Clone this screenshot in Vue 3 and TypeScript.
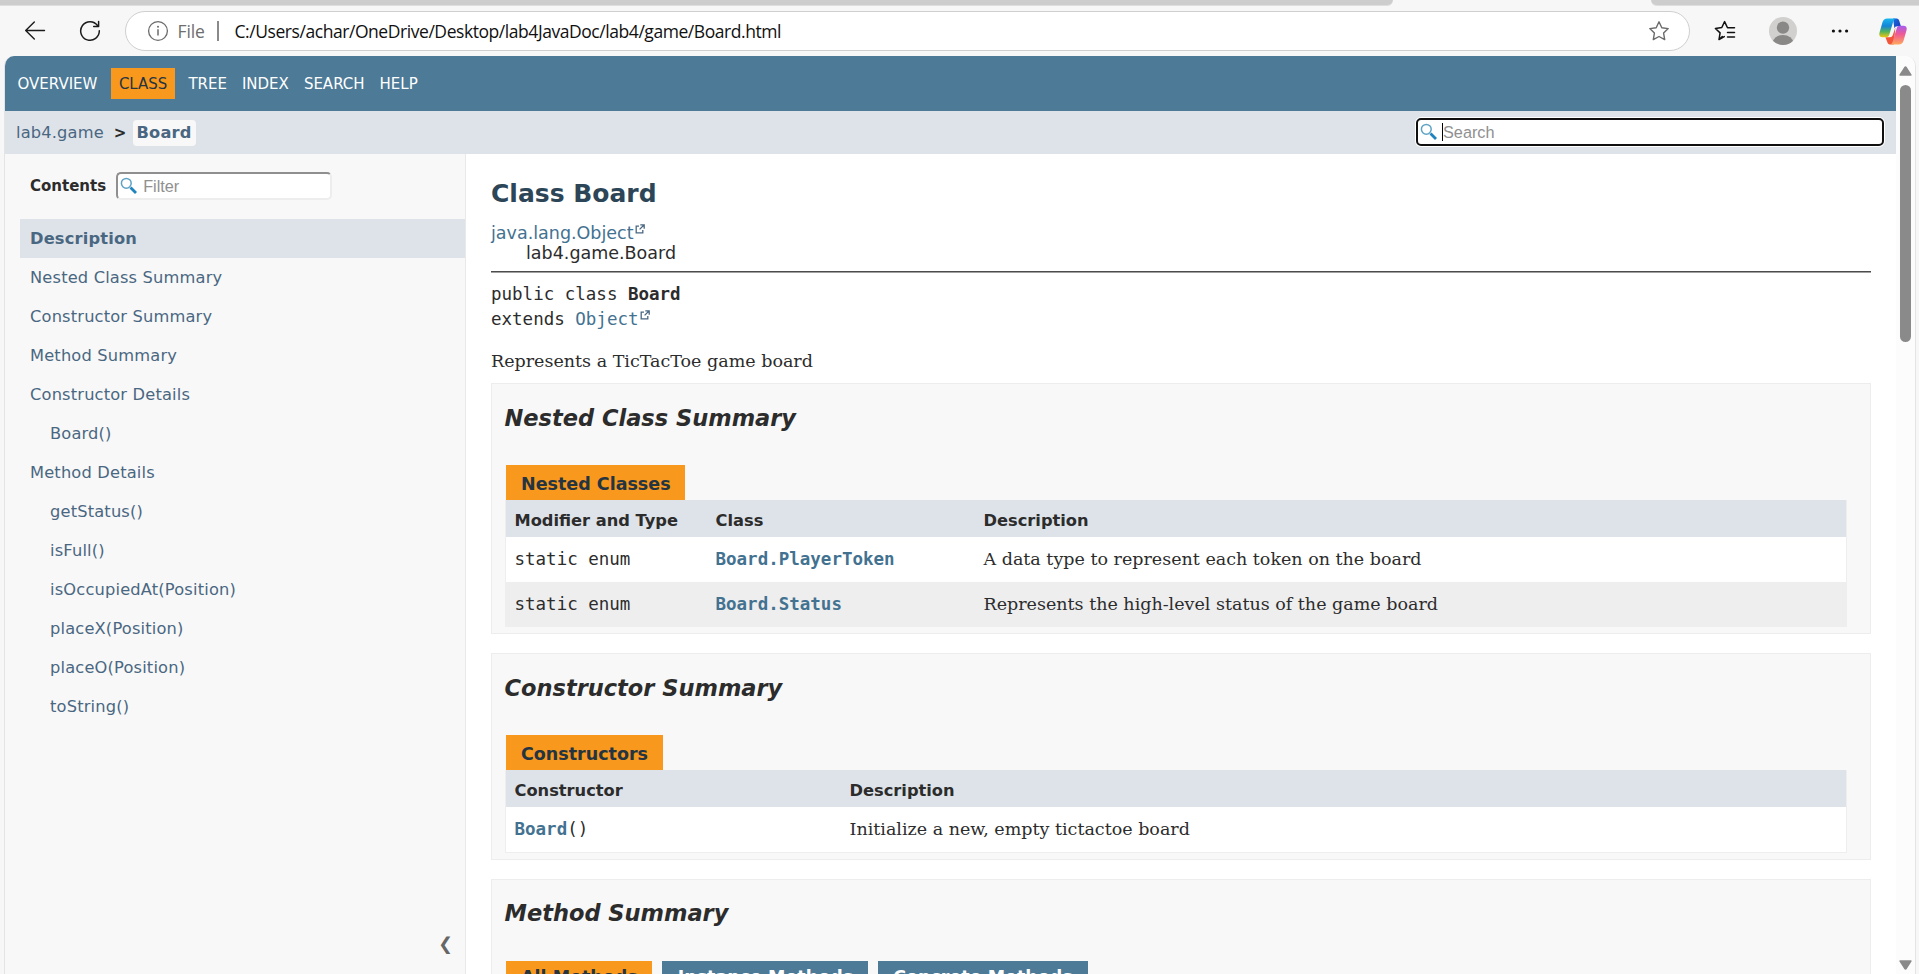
<script setup lang="ts">
import { ref } from 'vue'

interface TocItem {
  label: string
  nested?: boolean
}

interface SummaryRow {
  modifier?: string
  name: string
  suffix?: string
  description: string
}

interface Summary {
  title: string
  caption: string
  kind: string
  columns: string[]
  rows: SummaryRow[]
}

const url = 'C:/Users/achar/OneDrive/Desktop/lab4JavaDoc/lab4/game/Board.html'
const navItems = ['OVERVIEW', 'CLASS', 'TREE', 'INDEX', 'SEARCH', 'HELP']
const activeNav = ref('CLASS')
const activeToc = ref('Description')

const toc: TocItem[] = [
  { label: 'Description' },
  { label: 'Nested Class Summary' },
  { label: 'Constructor Summary' },
  { label: 'Method Summary' },
  { label: 'Constructor Details' },
  { label: 'Board()', nested: true },
  { label: 'Method Details' },
  { label: 'getStatus()', nested: true },
  { label: 'isFull()', nested: true },
  { label: 'isOccupiedAt(Position)', nested: true },
  { label: 'placeX(Position)', nested: true },
  { label: 'placeO(Position)', nested: true },
  { label: 'toString()', nested: true },
]

const summaries: Summary[] = [
  {
    title: 'Nested Class Summary',
    caption: 'Nested Classes',
    kind: 'three',
    columns: ['Modifier and Type', 'Class', 'Description'],
    rows: [
      { modifier: 'static enum', name: 'Board.PlayerToken', description: 'A data type to represent each token on the board' },
      { modifier: 'static enum', name: 'Board.Status', description: 'Represents the high-level status of the game board' },
    ],
  },
  {
    title: 'Constructor Summary',
    caption: 'Constructors',
    kind: 'two',
    columns: ['Constructor', 'Description'],
    rows: [{ name: 'Board', suffix: '()', description: 'Initialize a new, empty tictactoe board' }],
  },
]

const methodTabs = ['All Methods', 'Instance Methods', 'Concrete Methods']
const activeTab = ref('All Methods')
</script>

<template>
  <div class="browser">
    <header class="toolbar">
      <div class="tabs"><i class="tab-left"></i><i class="tab-right"></i></div>
      <div class="controls">
        <svg class="back" width="22" height="20" viewBox="0 0 22 20" fill="none" stroke="#1b1b1b" stroke-width="1.4" stroke-linecap="round" stroke-linejoin="round">
          <path d="M10.3 .9 1.7 9.500l8.600 8.600M1.900 9.500h18.600" />
        </svg>
        <svg class="reload" width="22" height="22" viewBox="0 0 22 22" fill="none" stroke="#1b1b1b" stroke-width="1.5" stroke-linecap="round" stroke-linejoin="round">
          <path d="M20.3 10.7A9.3 9.3 0 1 1 18.6 5.6M19.6 1.6v4.9h-4.9" />
        </svg>
        <div class="address">
          <svg width="22" height="22" viewBox="0 0 22 22" fill="none" stroke="#6b6b6b" stroke-width="1.3">
            <circle cx="11" cy="11" r="9.4" />
            <path d="M11 9.3v6.3" stroke-width="1.5" />
            <circle cx="11" cy="6.7" r="1" fill="#6b6b6b" stroke="none" />
          </svg>
          <span class="scheme">File</span>
          <i class="divider"></i>
          <span class="url">{{ url }}</span>
          <svg class="star" width="22" height="22" viewBox="0 0 22 22" fill="none" stroke="#6b6b6b" stroke-width="1.4" stroke-linejoin="round">
            <path d="M11 1.8l2.8 5.9 6.4.9-4.6 4.5 1.1 6.5L11 16.5l-5.7 3.1 1.1-6.5L1.8 8.6l6.4-.9z" />
          </svg>
        </div>
        <svg class="favorites" width="22" height="22" viewBox="0 0 22 22" fill="none" stroke="#111" stroke-width="1.5" stroke-linejoin="round" stroke-linecap="round">
          <path d="M8.300 16.500 5 19.500l1.100-6.600-4.700-4.400 6.400-1 2.800-5.900 2.900 6.200h7M5 19.500l5.300-2.900M13.500 12.500h7M13.500 17.100h7" />
        </svg>
        <svg class="avatar" width="28" height="28" viewBox="0 0 28 28">
          <defs><clipPath id="face"><circle cx="14" cy="14" r="14" /></clipPath></defs>
          <g clip-path="url(#face)">
            <rect width="28" height="28" fill="#d2d0ce" />
            <circle cx="14" cy="10.6" r="6.2" fill="#8a8886" />
            <ellipse cx="14" cy="25.6" rx="10.2" ry="7.7" fill="#8a8886" />
          </g>
        </svg>
        <svg class="dots" width="18" height="6" viewBox="0 0 18 6" fill="#111">
          <circle cx="2.4" cy="3" r="1.6" /><circle cx="9" cy="3" r="1.6" /><circle cx="15.6" cy="3" r="1.6" />
        </svg>
        <svg class="copilot" width="28" height="27" viewBox="0 0 28 27">
          <defs>
            <linearGradient id="cpA" x1="0" y1="0" x2="0" y2="1">
              <stop offset="0" stop-color="#19b5ee" /><stop offset=".4" stop-color="#1485d8" />
              <stop offset=".7" stop-color="#55b35a" /><stop offset="1" stop-color="#f2c80f" />
            </linearGradient>
            <linearGradient id="cpB" x1="0" y1="0" x2="0" y2="1">
              <stop offset="0" stop-color="#a75bf0" /><stop offset=".45" stop-color="#ee5a95" />
              <stop offset="1" stop-color="#ffa85c" />
            </linearGradient>
            <linearGradient id="cpC" x1="0" y1="0" x2="1" y2="1">
              <stop offset="0" stop-color="#1b6fe0" /><stop offset="1" stop-color="#1a35b8" />
            </linearGradient>
          </defs>
          <path d="M14 .6h3.6c1.6 0 2.3 1 2.8 2.6l1.5 5h-3.4c-2 0-2.6.8-3.1 2.4z" fill="url(#cpC)" />
          <path d="M6.4 19.2h4.2c1.8 0 2.6-.7 3.2-2.2l2.6-7.5-1.6 16.9H11c-1.600 0-2.300-1-2.700-2.400z" fill="#f2553a" />
          <path d="M8.300.6h8.500c-1.500.4-2.100 1.600-2.600 3.200l-3.700 12.200c-.7 2.200-1.500 3.300-3.300 3.300H3.600C.8 19.300-.2 17.500.5 14.800L3.400 4.500C4.200 1.900 5.700.6 8.300.6z" fill="url(#cpA)" />
          <path d="M19.700 26.500h-8.500c1.500-.4 2.100-1.600 2.600-3.200l3.700-12.200c.7-2.200 1.500-3.300 3.300-3.300h3.600c2.800 0 3.800 1.800 3.100 4.500l-2.900 10.300c-.8 2.600-2.300 3.900-4.900 3.900z" fill="url(#cpB)" />
        </svg>
      </div>
    </header>

    <div class="window">
      <div class="page">
        <nav class="top-nav">
          <a v-for="item in navItems" :key="item" :class="{ active: item === activeNav }">{{ item }}</a>
        </nav>
        <div class="sub-nav">
          <a>lab4.game</a>
          <span class="sep">&gt;</span>
          <a class="current">Board</a>
          <label class="field search">
            <svg width="18" height="18" viewBox="0 0 18 18" fill="none">
              <circle cx="6.300" cy="6.300" r="4.900" stroke="#5fa3c4" stroke-width="1.500" />
              <path d="M10.500 10.500 16 16" stroke="#1f83be" stroke-width="2.800" />
            </svg>
            <i class="caret"></i>
            <input type="text" placeholder="Search" />
          </label>
        </div>

        <div class="columns">
          <aside class="sidebar">
            <div class="toc-header">
              <span>Contents</span>
              <label class="field filter">
                <svg width="18" height="18" viewBox="0 0 18 18" fill="none">
                  <circle cx="6.300" cy="6.300" r="4.900" stroke="#5fa3c4" stroke-width="1.500" />
                  <path d="M10.500 10.500 16 16" stroke="#1f83be" stroke-width="2.800" />
                </svg>
                <input type="text" placeholder="Filter" />
              </label>
            </div>
            <ol class="toc">
              <li v-for="item in toc" :key="item.label" :class="{ nested: item.nested, selected: item.label === activeToc }">
                {{ item.label }}
              </li>
            </ol>
            <span class="collapse">❮</span>
          </aside>

          <main>
            <h1>Class Board</h1>
            <div class="inheritance">
              <div><a>java.lang.Object</a><svg class="ext" width="10" height="10" viewBox="0 0 10 10" fill="none" stroke="#4a6782" stroke-width="1.300"><path d="M4 2.200H1.200v6.600h6.600V6M5.300.9h3.900v3.900M9 1 4.600 5.400" /></svg></div>
              <div class="child">lab4.game.Board</div>
            </div>
            <hr />
            <div class="signature">
              <div>public class <b>Board</b></div>
              <div>extends <a>Object</a><svg class="ext" width="10" height="10" viewBox="0 0 10 10" fill="none" stroke="#4a6782" stroke-width="1.300"><path d="M4 2.200H1.200v6.600h6.600V6M5.300.9h3.900v3.900M9 1 4.600 5.400" /></svg></div>
            </div>
            <p class="block">Represents a TicTacToe game board</p>

            <section v-for="s in summaries" :key="s.title">
              <h2>{{ s.title }}</h2>
              <div class="caption">{{ s.caption }}</div>
              <div class="table" :class="s.kind">
                <div class="row head">
                  <span v-for="c in s.columns" :key="c">{{ c }}</span>
                </div>
                <div v-for="r in s.rows" :key="r.name" class="row">
                  <code v-if="r.modifier">{{ r.modifier }}</code>
                  <code><a>{{ r.name }}</a>{{ r.suffix }}</code>
                  <span>{{ r.description }}</span>
                </div>
              </div>
            </section>

            <section class="last">
              <h2>Method Summary</h2>
              <div class="method-tabs">
                <button v-for="t in methodTabs" :key="t" :class="{ active: t === activeTab }" @click="activeTab = t">{{ t }}</button>
              </div>
            </section>
          </main>
        </div>
      </div>
      <div class="scrollbar">
        <svg width="13" height="10" viewBox="0 0 13 10"><path d="M5.300 1a1.400 1.400 0 0 1 2.400 0l4.800 7.400c.4.700.2 1.400-.6 1.400H1.100C.3 9.800.1 9.100.5 8.400z" fill="#8a8a8a" /></svg>
        <i class="thumb"></i>
        <svg class="down" width="13" height="10" viewBox="0 0 13 10"><path d="M5.300 9a1.400 1.400 0 0 0 2.400 0l4.800-7.400c.4-.7.2-1.400-.6-1.400H1.100C.3.200.1.900.5 1.600z" fill="#8a8a8a" /></svg>
      </div>
    </div>
  </div>
</template>

<style>
html,
body {
  margin: 0;
  overflow: hidden;
}
</style>

<style scoped>
.browser {
  display: flex;
  flex-direction: column;
  width: 1919px;
  height: 974px;
  overflow: hidden;
  background: #f7f7f7;
  color: #2c2c2c;
  font-family: 'DejaVu Sans', Arial, sans-serif;
  font-size: 17.5px;
}
svg {
  display: block;
  flex: none;
}
a {
  color: #4a6782;
}

/* Browser chrome */
.toolbar {
  height: 56px;
  flex: none;
}
.tabs {
  display: flex;
  justify-content: space-between;
  height: 6px;
}
.tabs i {
  height: 5px;
  background: #cdcdcd;
  border-bottom: 1px solid #dedede;
}
.tab-left {
  width: 1393px;
  border-bottom-right-radius: 9px;
}
.tab-right {
  width: 268px;
  border-bottom-left-radius: 9px;
}
.controls {
  display: flex;
  align-items: center;
  height: 40px;
  margin-top: 5px;
  padding-left: 24px;
}
.reload {
  margin-left: 33px;
}
.address {
  display: flex;
  align-items: center;
  box-sizing: border-box;
  width: 1565px;
  height: 40px;
  margin-left: 24px;
  padding-left: 20.5px;
  border: 1px solid #cfcfcf;
  border-radius: 20px;
  background: #fff;
  font-family: 'Open Sans', 'Noto Sans', sans-serif;
  font-size: 17.5px;
  line-height: 38px;
  white-space: nowrap;
}
.scheme {
  width: 28px;
  margin-left: 9px;
  color: #6e6e6e;
  letter-spacing: -0.1px;
}
.divider {
  width: 2px;
  height: 20px;
  margin-left: 11px;
  background: #8a8a8a;
}
.url {
  margin-left: 16px;
  color: #101010;
  letter-spacing: -0.44px;
}
.star {
  margin: 0 19px 0 auto;
}
.favorites {
  margin-left: 24px;
}
.avatar {
  margin-left: 33px;
}
.dots {
  margin-left: 34px;
}
.copilot {
  margin-left: 30px;
}

/* Window frame */
.window {
  display: flex;
  flex: 1;
  width: 1910px;
  margin-left: 4px;
  border-left: 1px solid #e4e4e4;
  border-right: 1px solid #e4e4e4;
  border-radius: 10px 10px 0 0;
  overflow: hidden;
  background: #fff;
}
.page {
  display: flex;
  flex-direction: column;
  width: 1891px;
  height: 918px;
}
.top-nav {
  display: flex;
  align-items: center;
  flex: none;
  height: 55px;
  padding-left: 12.5px;
  background: #4d7a97;
  font-size: 15px;
}
.top-nav a {
  margin-right: 15px;
  padding-top: 1px;
  color: #fff;
}
.top-nav a.active {
  margin: 0 13px 0 -1.5px;
  padding: 1px 8px 0;
  background: #f8981d;
  color: #253441;
  line-height: 30px;
}
.sub-nav {
  display: flex;
  align-items: center;
  flex: none;
  height: 43px;
  padding: 0 12px 0 11px;
  background: #dee3e9;
  font-size: 16.25px;
  letter-spacing: 0.16px;
}
.sep {
  margin: 0 6px 0 10px;
  font-weight: 700;
  font-size: 15px;
}
.current {
  padding: 0 4px;
  border-radius: 4px;
  background: #f8f8f8;
  font-weight: 700;
  line-height: 26px;
}
.field {
  display: flex;
  align-items: center;
  box-sizing: border-box;
  height: 28px;
  border-radius: 5px;
  background: #fff;
}
.field input {
  flex: 1;
  min-width: 0;
  padding: 0;
  border: 0;
  outline: 0;
  background: transparent;
  font: 16.25px 'Liberation Sans', Arial, sans-serif;
}
.field input::placeholder {
  color: #909090;
  opacity: 1;
}
.search {
  width: 468px;
  margin: 0 0 1px auto;
  padding-left: 2px;
  border: 2px solid #101010;
  box-shadow: 0 0 0 1px #fff;
}
.caret {
  width: 1px;
  height: 18px;
  margin-left: 4px;
  background: #000;
}
.filter {
  width: 216px;
  padding-left: 2px;
  border: 2px solid;
  border-color: #8f8f8f #ededed #ededed #8f8f8f;
}
.filter input {
  padding-left: 5px;
}
.columns {
  display: flex;
  flex: 1;
  min-height: 0;
}
.sidebar {
  display: flex;
  flex-direction: column;
  box-sizing: border-box;
  width: 461px;
  padding-left: 15px;
  border-right: 1px solid #e9e9e9;
  background: #f8f8f8;
}
.toc-header {
  display: flex;
  align-items: center;
  gap: 10px;
  height: 28px;
  margin: 18px 0 19px;
  padding-left: 10px;
  font-size: 15px;
  font-weight: 700;
}
.toc {
  margin: 0;
  padding: 0;
  list-style: none;
  font-size: 16.25px;
  letter-spacing: 0.17px;
}
.toc li {
  padding-left: 10px;
  color: #4a6782;
  line-height: 39px;
}
.toc li.nested {
  padding-left: 30px;
}
.toc li.selected {
  background: #dee3e9;
  font-weight: 700;
}
.collapse {
  margin: auto 12px 18px auto;
  color: #666;
  font-size: 17.5px;
  line-height: 24px;
}

/* Class documentation */
main {
  width: 1380px;
  padding: 23px 0 0 25px;
}
main a {
  color: #437291;
}
h1 {
  margin: 0 0 12px;
  color: #2c4557;
  font-size: 25px;
  line-height: 34px;
}
.inheritance {
  line-height: 20px;
}
.ext {
  display: inline-block;
  margin-left: 1px;
  vertical-align: 5px;
}
.inheritance,
.signature {
  white-space: pre;
}
.inheritance > div {
  height: 20px;
}
.child {
  padding-left: 35px;
}
hr {
  height: 0;
  margin: 8px 0 9px;
  border: 0;
  border-top: 1px solid #4c4c4c;
  border-bottom: 1px solid #a0a0a0;
}
.signature {
  font-family: 'DejaVu Sans Mono', monospace;
  line-height: 25px;
}
.signature > div {
  height: 25px;
}
.block {
  margin: 17px 0 10px;
  font-family: 'DejaVu Serif', Georgia, serif;
  line-height: 24px;
}
section {
  margin-bottom: 19px;
  padding: 19px 23px 6px 13px;
  border: 1px solid #ededed;
  background: #f8f8f8;
}
section.last {
  height: 200px;
  padding-top: 18px;
}
h2 {
  margin: 0 0 32px -0.5px;
  font-size: 22.5px;
  font-style: italic;
  line-height: 30px;
}
.last h2 {
  margin-bottom: 33px;
}
.caption {
  width: fit-content;
  margin-left: 1px;
  padding: 3px 14.5px 0 15px;
  background: #f8981d;
  color: #253441;
  font-weight: 700;
  line-height: 32px;
}
.table {
  border: 1px solid #eee;
  border-top: 0;
  background: #fff;
}
.row {
  display: grid;
  height: 45px;
  line-height: 45px;
}
.three .row {
  grid-template-columns: 15% 20% 65%;
}
.two .row {
  grid-template-columns: 25% 75%;
}
.row > * {
  padding-left: 8.5px;
}
.row:nth-child(odd):not(.head) {
  height: 44px;
  background: #eeeeef;
}
.row span {
  font-family: 'DejaVu Serif', Georgia, serif;
}
.row code {
  font-family: 'DejaVu Sans Mono', monospace;
  font-size: 17.5px;
}
.row code a {
  font-weight: 700;
}
.row.head {
  height: 37px;
  background: #dee3e9;
  font-size: 16.25px;
  font-weight: 700;
  line-height: 42px;
}
.row.head span {
  height: 37px;
  font-family: 'DejaVu Sans', Arial, sans-serif;
}
.method-tabs {
  display: flex;
  gap: 10px;
  margin-left: 1px;
}
.method-tabs button {
  height: 36px;
  padding: 0 15px 4px;
  border: 0;
  background: #4d7a97;
  color: #fff;
  font: 700 17.5px/32px 'DejaVu Sans', Arial, sans-serif;
}
.method-tabs button.active {
  padding-right: 14px;
  background: #f8981d;
  color: #253441;
}
.method-tabs button:nth-child(2) {
  padding-left: 16px;
}

/* Scrollbar */
.scrollbar {
  display: flex;
  flex-direction: column;
  align-items: center;
  width: 19px;
  box-sizing: border-box;
  padding: 10px 0 4px;
  background: #fcfcfc;
}
.thumb {
  width: 11px;
  height: 257px;
  margin-top: 9px;
  border-radius: 6px;
  background: #8a8a8a;
}
.down {
  margin-top: auto;
}
</style>
